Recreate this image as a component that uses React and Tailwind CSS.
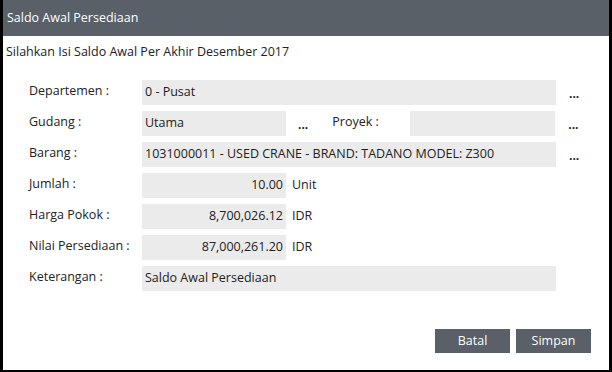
export default function App() {
  const font = { fontFamily: '"Open Sans", "Noto Sans", sans-serif' };
  const input = "h-[25px] bg-[#ebebeb] flex items-center px-[3px] text-[12.5px] text-[#222] whitespace-nowrap";
  const Dots = ({ className = "" }) => (
    <div className={"text-[12px] font-bold text-[#222] leading-none pt-[3px] " + className}>...</div>
  );
  return (
    <div className="w-[612px] h-[372px] bg-black" style={font}>
      <div className="w-[606px] h-[370px] ml-[3px] bg-white flex flex-col">
        <div className="h-[36px] bg-[#596068] flex items-center px-[4px] text-white text-[12.5px]">
          Saldo Awal Persediaan
        </div>
        <div className="pl-[3px] pt-[7px] text-[12.5px] text-[#222] h-[22px]">
          Silahkan Isi Saldo Awal Per Akhir Desember 2017
        </div>
        <div className="flex flex-col gap-[6px] pl-[26px] mt-[22px] text-[12.5px] text-[#222]">
          <div className="flex items-center">
            <div className="w-[113px] pb-[2px]">Departemen :</div>
            <div className={input + " w-[414px]"}>0 - Pusat</div>
            <Dots className="ml-[13px]" />
          </div>
          <div className="flex items-center">
            <div className="w-[113px] pb-[2px]">Gudang :</div>
            <div className={input + " w-[144px]"}>Utama</div>
            <Dots className="ml-[12px]" />
            <div className="ml-[24px] w-[78px] pb-[2px]">Proyek :</div>
            <div className={input + " w-[145px]"}></div>
            <Dots className="ml-[13px]" />
          </div>
          <div className="flex items-center">
            <div className="w-[113px] pb-[2px]">Barang :</div>
            <div className={input + " w-[414px]"}>1031000011 - USED CRANE - BRAND: TADANO MODEL: Z300</div>
            <Dots className="ml-[13px]" />
          </div>
          <div className="flex items-center">
            <div className="w-[113px] pb-[2px]">Jumlah :</div>
            <div className={input + " w-[144px] justify-end"}>10.00</div>
            <div className="ml-[6px]">Unit</div>
          </div>
          <div className="flex items-center">
            <div className="w-[113px] pb-[2px]">Harga Pokok :</div>
            <div className={input + " w-[144px] justify-end"}>8,700,026.12</div>
            <div className="ml-[6px]">IDR</div>
          </div>
          <div className="flex items-center">
            <div className="w-[113px] pb-[2px]">Nilai Persediaan :</div>
            <div className={input + " w-[144px] justify-end"}>87,000,261.20</div>
            <div className="ml-[6px]">IDR</div>
          </div>
          <div className="flex items-center">
            <div className="w-[113px] pb-[2px]">Keterangan :</div>
            <div className={input + " w-[414px]"}>Saldo Awal Persediaan</div>
          </div>
        </div>
        <div className="flex justify-end gap-[6px] mt-[38px] pr-[18px]">
          <button className="w-[75px] h-[24px] bg-[#596068] text-white text-[12.5px]">Batal</button>
          <button className="w-[75px] h-[24px] bg-[#596068] text-white text-[12.5px]">Simpan</button>
        </div>
      </div>
    </div>
  );
}
